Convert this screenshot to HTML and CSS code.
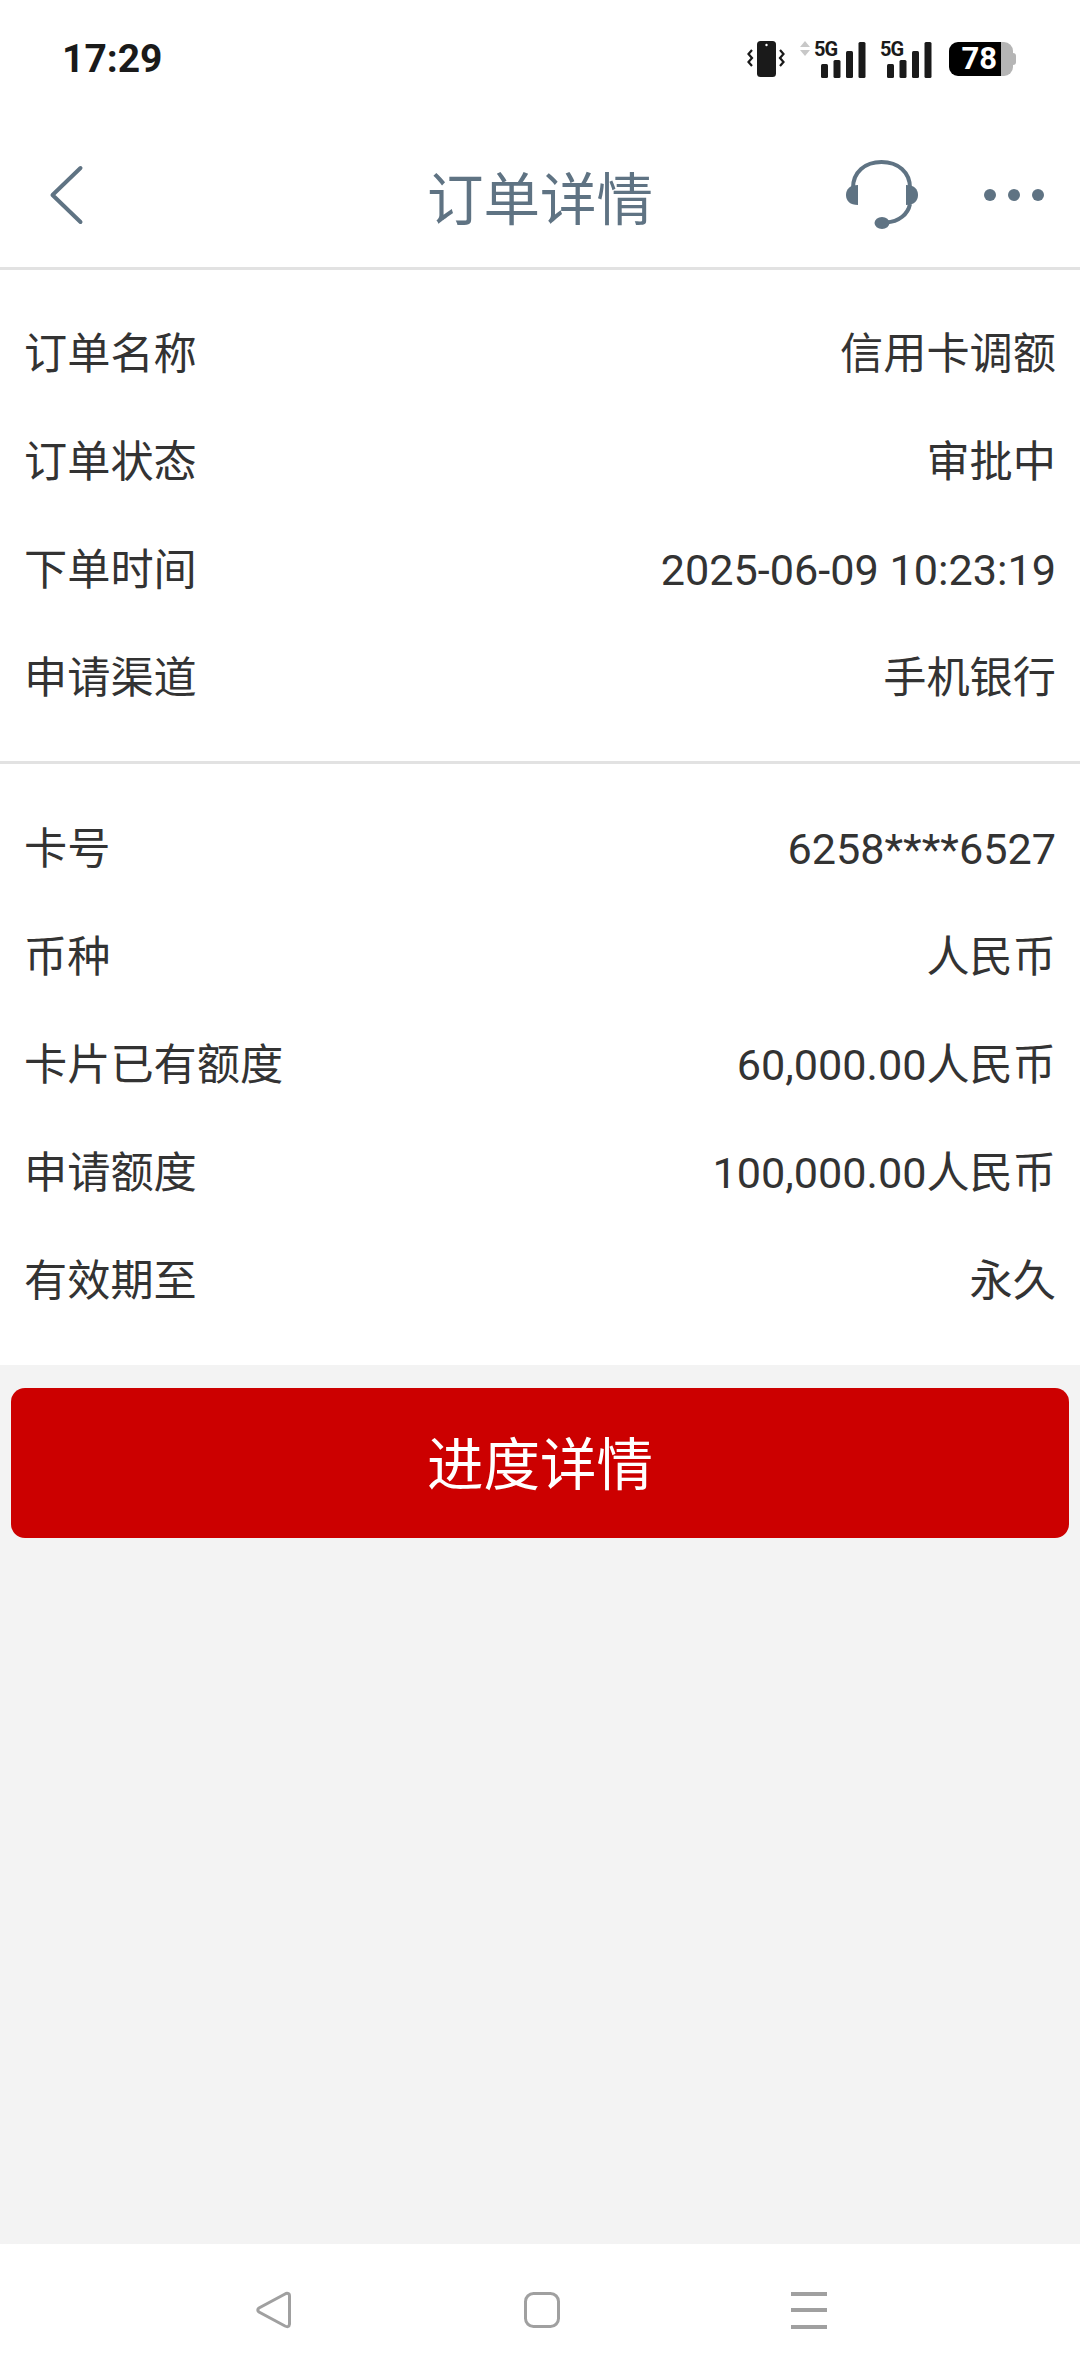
FILE: index.html
```html
<!DOCTYPE html>
<html lang="zh-CN">
<head>
    <meta charset="UTF-8">
    <meta name="viewport" content="width=device-width, initial-scale=1.0">
    <title>订单详情</title>
    <link rel="stylesheet" href="styles.css">
</head>
<body>
    <div class="page">
        <div class="status-bar">
            <span class="time">17:29</span>
            <div class="status-icons">
                <svg class="icon-vibrate" width="38" height="38" viewBox="0 0 38 38">
                    <rect x="10" y="1" width="19" height="36" rx="3.5" fill="#1a1a1a"/>
                    <circle cx="19.500" cy="5" r="1.2" fill="#fff"/>
                    <path d="M5 10 L1.500 14 L5 18 L1.500 22 L5 26" fill="none" stroke="#1a1a1a" stroke-width="2.2"/>
                    <path d="M33 10 L36.500 14 L33 18 L36.500 22 L33 26" fill="none" stroke="#1a1a1a" stroke-width="2.2"/>
                </svg>
                <div class="signal">
                    <svg class="data-arrows" width="10" height="16" viewBox="0 0 10 16">
                        <path d="M5 0 L10 6 H0 Z M0 9 H10 L5 15 Z" fill="#c8c8c8"/>
                    </svg>
                    <span class="net">5G</span>
                    <svg width="46" height="36" viewBox="0 0 46 36">
                        <rect x="1" y="22" width="7" height="14" rx="1.5"/>
                        <rect x="13.500" y="18" width="7" height="18" rx="1.5"/>
                        <rect x="26" y="9" width="7" height="27" rx="1.5"/>
                        <rect x="38.500" y="0" width="7" height="36" rx="1.5"/>
                    </svg>
                </div>
                <div class="signal second">
                    <span class="net">5G</span>
                    <svg width="46" height="36" viewBox="0 0 46 36">
                        <rect x="1" y="22" width="7" height="14" rx="1.5"/>
                        <rect x="13.500" y="18" width="7" height="18" rx="1.5"/>
                        <rect x="26" y="9" width="7" height="27" rx="1.5"/>
                        <rect x="38.500" y="0" width="7" height="36" rx="1.5"/>
                    </svg>
                </div>
                <div class="battery">
                    <span class="battery-level">78</span>
                    <span class="battery-rest"></span>
                    <span class="battery-cap"></span>
                </div>
            </div>
        </div>

        <header class="top-bar">
            <svg class="back" width="40" height="62" viewBox="0 0 40 62">
                <path d="M35.500 5 L7.500 32 L35.500 59" fill="none" stroke="#5f7383" stroke-width="4" stroke-linecap="round" stroke-linejoin="round"/>
            </svg>
            <h1 class="title">订单详情</h1>
            <div class="top-actions">
                <svg class="headset" width="74" height="74" viewBox="0 0 74 74">
                    <path d="M9 30 C9 14 21 4 37.500 4 C54 4 66 14 66 30 M66 46 C64 56 55 64 42 64.500" fill="none" stroke="#5f7383" stroke-width="4"/>
                    <path d="M14 27 C6 27 2 31 2 37 C2 43 6 47 14 47 Z" fill="#5f7383"/>
                    <path d="M62 27 C70 27 74 31 74 37 C74 43 70 47 62 47 Z" fill="#5f7383"/>
                    <ellipse cx="38" cy="65" rx="7.500" ry="6" fill="#5f7383"/>
                </svg>
                <div class="more">
                    <span></span><span></span><span></span>
                </div>
            </div>
        </header>

        <section class="info-group first">
            <div class="row"><span>订单名称</span><span>信用卡调额</span></div>
            <div class="row"><span>订单状态</span><span>审批中</span></div>
            <div class="row"><span>下单时间</span><span>2025-06-09 10:23:19</span></div>
            <div class="row"><span>申请渠道</span><span>手机银行</span></div>
        </section>

        <section class="info-group second">
            <div class="row"><span>卡号</span><span>6258****6527</span></div>
            <div class="row"><span>币种</span><span>人民币</span></div>
            <div class="row"><span>卡片已有额度</span><span>60,000.00人民币</span></div>
            <div class="row"><span>申请额度</span><span>100,000.00人民币</span></div>
            <div class="row"><span>有效期至</span><span>永久</span></div>
        </section>

        <main class="content">
            <button class="progress-btn">进度详情</button>
        </main>

        <nav class="nav-bar">
            <svg width="38" height="38" viewBox="0 0 38 38">
                <path d="M34 3 Q32 1.500 30 3 L4 17 Q1.500 19 4 21 L30 35 Q34 37 34.500 33 V5 Q34.500 4 34 3 Z" fill="none" stroke="#a0a0a0" stroke-width="3"/>
            </svg>
            <svg width="38" height="38" viewBox="0 0 38 38">
                <rect x="2.500" y="2.500" width="33" height="33" rx="8" fill="none" stroke="#a0a0a0" stroke-width="3"/>
            </svg>
            <div class="menu-lines">
                <span></span><span></span><span></span>
            </div>
        </nav>
    </div>
</body>
</html>
```

FILE: styles.css
```css
* {
    box-sizing: border-box;
}
body {
    margin: 0;
    background: #f3f3f3;
    font-family: Roboto, "Noto Sans CJK SC", sans-serif;
    color: #333;
}
.page {
    width: 1080px;
    height: 2376px;
    display: flex;
    flex-direction: column;
}

/* status bar */
.status-bar {
    height: 118px;
    background: #fff;
    display: flex;
    justify-content: space-between;
    align-items: center;
    padding: 0 64px 0 62px;
}
.time {
    font-size: 39px;
    font-weight: 700;
    color: #1a1a1a;
}
.status-icons {
    display: flex;
    align-items: center;
}
.signal {
    display: flex;
    align-items: flex-end;
    position: relative;
    margin-left: 9px;
    height: 38px;
    padding-left: 26px;
}
.signal svg {
    fill: #1a1a1a;
}
.signal.second {
    margin-left: 0;
    padding-left: 20px;
}
.data-arrows {
    position: absolute;
    left: 6px;
    top: 1px;
}
.net {
    position: absolute;
    left: 20px;
    top: -1px;
    font-size: 20px;
    font-weight: 700;
    line-height: 20px;
    color: #1a1a1a;
    letter-spacing: -1px;
}
.signal.second .net {
    left: 14px;
}
.battery {
    display: flex;
    align-items: center;
    margin-left: 17px;
    height: 34px;
}
.battery-level {
    width: 52px;
    height: 34px;
    background: #000;
    color: #fff;
    border-radius: 9px 0 0 9px;
    font-size: 31px;
    font-weight: 700;
    line-height: 34px;
    text-align: right;
    padding-right: 4px;
}
.battery-rest {
    width: 12px;
    height: 34px;
    background: #b5b5b5;
    border-radius: 0 9px 9px 0;
}
.battery-cap {
    width: 3px;
    height: 12px;
    background: #b5b5b5;
    border-radius: 0 3px 3px 0;
}

/* title bar */
.top-bar {
    height: 152px;
    background: #fff;
    border-bottom: 3px solid #e2e2e2;
    display: flex;
    align-items: center;
    justify-content: space-between;
    position: relative;
    padding: 5px 36px 0 45px;
}
.title {
    position: absolute;
    left: 0;
    right: 0;
    margin: 0;
    text-align: center;
    font-size: 56.5px;
    font-weight: 400;
    color: #5f7383;
}
.back {
    margin-bottom: 2px;
}
.top-actions {
    display: flex;
    align-items: center;
    gap: 66px;
}
.more {
    display: flex;
    gap: 12px;
}
.more span {
    width: 12px;
    height: 12px;
    border-radius: 50%;
    background: #5f7383;
}

/* info rows */
.info-group {
    background: #fff;
    padding: 25px 24px 34px;
}
.info-group.first {
    border-bottom: 3px solid #e2e2e2;
}
.info-group.second {
    height: 601px;
    padding-top: 26px;
}
.row {
    height: 108px;
    display: flex;
    justify-content: space-between;
    align-items: center;
    padding-top: 11px;
    font-size: 43.2px;
    line-height: 60px;
    color: #333;
}

/* button */
.content {
    flex: 1;
    padding: 23px 11px 0;
}
.progress-btn {
    display: block;
    width: 100%;
    height: 150px;
    border: none;
    border-radius: 14px;
    padding: 0 0 6px;
    background: #cc0000;
    color: #fff;
    font-family: inherit;
    font-size: 56.5px;
}

/* bottom nav */
.nav-bar {
    height: 132px;
    background: #fff;
    display: flex;
    align-items: center;
    padding-left: 255px;
    gap: 230px;
}
.menu-lines {
    width: 36px;
    height: 37px;
    display: flex;
    flex-direction: column;
    justify-content: space-between;
}
.menu-lines span {
    height: 4px;
    background: #a0a0a0;
}
```
